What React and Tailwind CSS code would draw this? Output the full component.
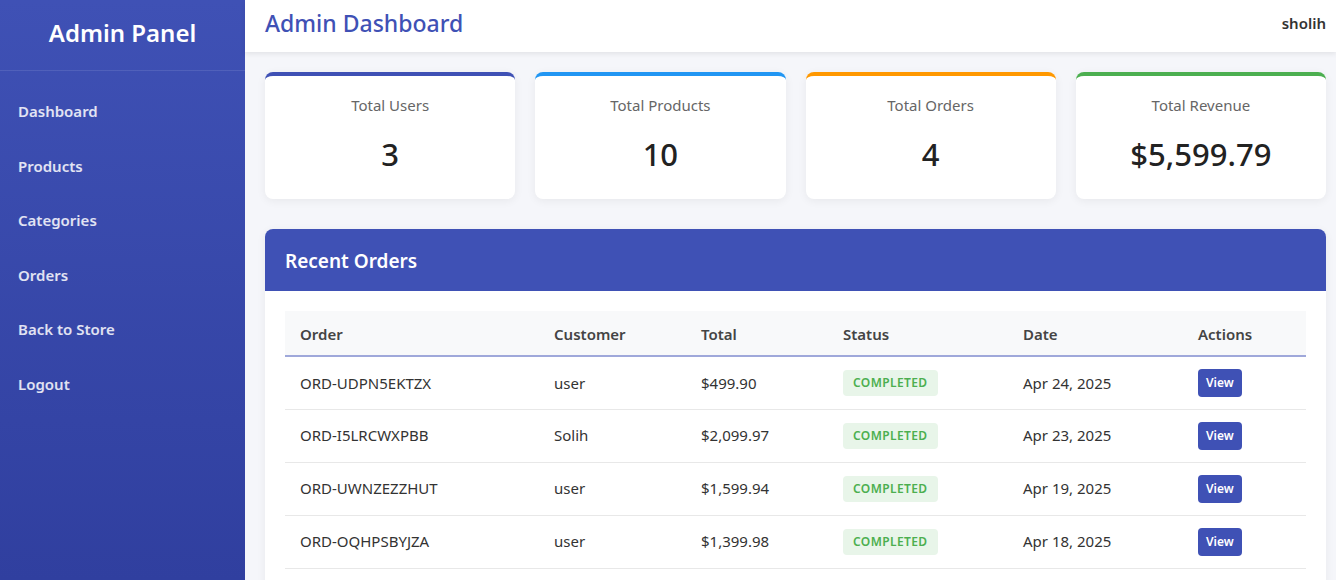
import React from "react";

const stats = [
  { label: "Total Users", value: "3", color: "border-t-[#3f51b5]" },
  { label: "Total Products", value: "10", color: "border-t-[#2196f3]" },
  { label: "Total Orders", value: "4", color: "border-t-[#ff9800]" },
  { label: "Total Revenue", value: "$5,599.79", color: "border-t-[#4caf50]" },
];

const orders = [
  ["ORD-UDPN5EKTZX", "user", "$499.90", "Apr 24, 2025"],
  ["ORD-I5LRCWXPBB", "Solih", "$2,099.97", "Apr 23, 2025"],
  ["ORD-UWNZEZZHUT", "user", "$1,599.94", "Apr 19, 2025"],
  ["ORD-OQHPSBYJZA", "user", "$1,399.98", "Apr 18, 2025"],
];

const nav = ["Dashboard", "Products", "Categories", "Orders", "Back to Store", "Logout"];

export default function App() {
  return (
    <div
      className="flex h-[580px] w-[1336px] overflow-hidden bg-[#f5f6fa]"
      style={{ fontFamily: '"Noto Sans", "Open Sans", sans-serif' }}
    >
      <aside className="flex w-[245px] shrink-0 flex-col bg-gradient-to-b from-[#3f51b5] to-[#303f9f] text-white">
        <div className="flex h-[71px] items-center justify-center border-b border-white/10 pb-[4px]">
          <h1 className="text-[24px] font-semibold leading-none">Admin Panel</h1>
        </div>
        <nav className="flex flex-col pt-[13px]">
          {nav.map((n) => (
            <a key={n} className="flex h-[54.6px] items-center px-[18px] text-[15px] font-semibold text-white/85">
              {n}
            </a>
          ))}
        </nav>
      </aside>
      <div className="flex min-w-0 flex-1 flex-col">
        <header className="relative z-10 flex h-[52px] shrink-0 items-center justify-between bg-white px-[20px] pb-[6px] shadow-[0_2px_5px_rgba(0,0,0,0.08)]">
          <h2 className="text-[23px] font-medium leading-none text-[#3f51b5]">Admin Dashboard</h2>
          <span className="-mr-[10px] text-[15px] font-semibold leading-none text-[#333]">sholih</span>
        </header>
        <main className="flex flex-col gap-[30px] p-[20px] pr-[10px]">
          <div className="grid grid-cols-4 gap-[20px]">
            {stats.map((s) => (
              <div
                key={s.label}
                className={`flex h-[127px] flex-col items-center rounded-[8px] border-t-4 bg-white shadow-[0_2px_10px_rgba(0,0,0,0.06)] ${s.color}`}
              >
                <div className="mt-[18px] text-[15px] text-[#666]">{s.label}</div>
                <div className="mt-[22px] text-[31px] font-medium leading-none text-[#222]">{s.value}</div>
              </div>
            ))}
          </div>
          <section className="overflow-hidden rounded-t-[8px] bg-white shadow-[0_2px_10px_rgba(0,0,0,0.06)]">
            <div className="flex h-[62px] items-center bg-[#3f51b5] px-[20px] pt-[2px]">
              <h3 className="text-[19px] font-semibold text-white">Recent Orders</h3>
            </div>
            <div className="p-[20px]">
              <table className="w-full border-collapse text-left">
                <thead>
                  <tr className="h-[45px] border-b-2 border-[#9fa8da] bg-[#f8f9fa] text-[15px] font-semibold text-[#444]">
                    <th className="w-[254px] px-[15px] pt-[2px] font-semibold">Order</th>
                    <th className="w-[147px] px-[15px] pt-[2px] font-semibold">Customer</th>
                    <th className="w-[142px] px-[15px] pt-[2px] font-semibold">Total</th>
                    <th className="w-[180px] px-[15px] pt-[2px] font-semibold">Status</th>
                    <th className="w-[175px] px-[15px] pt-[2px] font-semibold">Date</th>
                    <th className="px-[15px] pt-[2px] font-semibold">Actions</th>
                  </tr>
                </thead>
                <tbody>
                  {orders.map((o) => (
                    <tr key={o[0]} className="h-[53px] border-b border-[#e8e8e8] text-[15px] text-[#333]">
                      <td className="px-[15px]">{o[0]}</td>
                      <td className="px-[15px]">{o[1]}</td>
                      <td className="px-[15px]">{o[2]}</td>
                      <td className="px-[15px]">
                        <span className="inline-block rounded-[4px] bg-[#e8f5e9] px-[10px] py-[4px] text-[12px] font-semibold tracking-[0.4px] text-[#4caf50]">
                          COMPLETED
                        </span>
                      </td>
                      <td className="px-[15px]">{o[3]}</td>
                      <td className="px-[15px]">
                        <button className="h-[28px] rounded-[4px] bg-[#3f51b5] px-[8px] text-[12px] font-semibold text-white">
                          View
                        </button>
                      </td>
                    </tr>
                  ))}
                </tbody>
              </table>
            </div>
          </section>
        </main>
      </div>
    </div>
  );
}
